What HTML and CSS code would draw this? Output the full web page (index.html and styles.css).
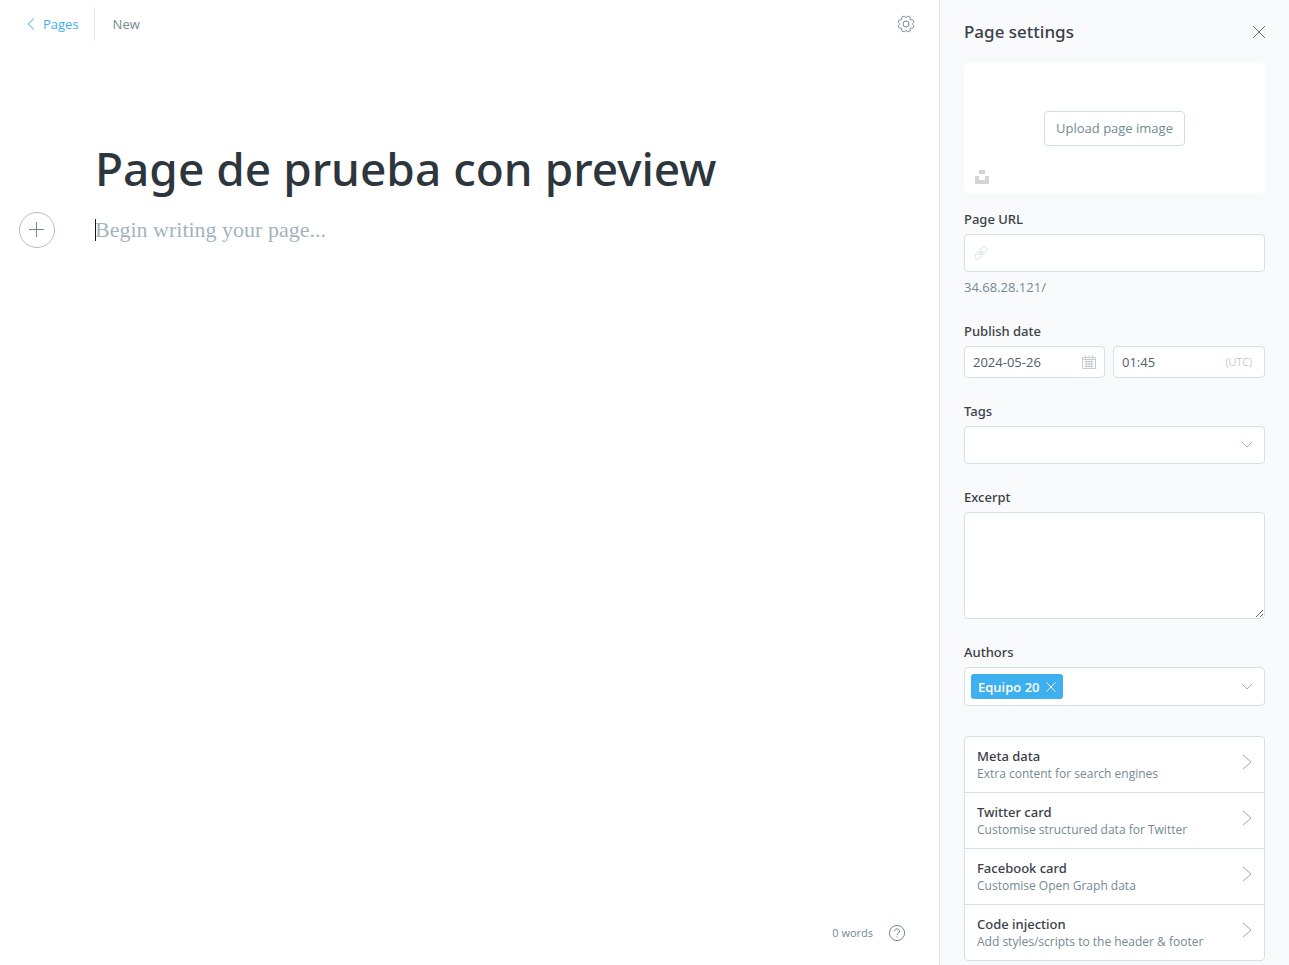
FILE: index.html
```html
<!DOCTYPE html>
<html lang="en">
<head>
<meta charset="utf-8">
<meta name="viewport" content="width=device-width, initial-scale=1">
<title>Page de prueba con preview</title>
<link rel="stylesheet" href="styles.css">
</head>
<body>
<div class="app">
  <main class="editor">
    <header class="editor-header">
      <nav class="breadcrumb">
        <a class="back-link" href="#"><svg class="back-icon" viewBox="0 0 8 12" aria-hidden="true"><path d="M7 .5 1 6l6 5.500"/></svg>Pages</a>
        <span class="status">New</span>
      </nav>
      <button class="icon-button" type="button" aria-label="Settings">
        <svg class="gear-icon" viewBox="0 0 18 18" aria-hidden="true"><circle cx="9" cy="9" r="3"/><path d="M6.900 1.200Q7.600.9 8 1.700Q8.400 2.700 9 2.700T10 1.700Q10.400.9 11.100 1.200L12.800 1.900Q13.500 2.200 13.200 3Q12.800 4 13.300 4.500T14.900 4.800Q15.700 4.500 16 5.200L16.700 6.900Q17 7.600 16.300 8Q15.300 8.400 15.300 9T16.300 10Q17 10.400 16.700 11.100L16 12.800Q15.700 13.500 14.900 13.200Q13.800 12.800 13.300 13.400T13.200 15Q13.500 15.800 12.800 16.100L11.100 16.800Q10.400 17.100 10 16.300Q9.600 15.300 9 15.300T8 16.300Q7.600 17.100 6.900 16.800L5.200 16.100Q4.500 15.800 4.800 15Q5.200 14 4.700 13.400T3.100 13.200Q2.300 13.500 2 12.800L1.300 11.100Q1 10.400 1.700 10Q2.700 9.600 2.700 9T1.700 8Q1 7.600 1.300 6.900L2 5.200Q2.300 4.500 3.100 4.800Q4.200 5.100 4.700 4.500T4.800 3Q4.500 2.200 5.200 1.900Z"/></svg>
      </button>
    </header>
    <section class="canvas">
      <input class="title-input" type="text" aria-label="Page title" value="Page de prueba con preview">
      <div class="body-row">
        <button class="plus-button" type="button" aria-label="Add a card"><svg class="plus-icon" viewBox="0 0 16 16" aria-hidden="true"><path d="M7.500 0v15M0 7.500h15"/></svg></button>
        <div class="body-field">
          <span class="caret"></span>
          <textarea class="body-input" rows="1" aria-label="Page content" placeholder="Begin writing your page..."></textarea>
        </div>
      </div>
    </section>
    <footer class="editor-footer">
      <span>0 words</span>
      <button class="icon-button" type="button" aria-label="Help"><svg class="help-icon" viewBox="0 0 18 18" aria-hidden="true"><circle cx="9" cy="9" r="7.600"/><path d="M6.600 7.200a2.400 2.400 0 1 1 3.700 2C9.400 9.800 9 10.200 9 11"/><path d="M9 12.400v1"/></svg></button>
    </footer>
  </main>

  <aside class="settings">
    <header class="settings-header">
      <h2 class="settings-title">Page settings</h2>
      <button class="icon-button" type="button" aria-label="Close"><svg class="close-icon" viewBox="0 0 12 12" aria-hidden="true"><path d="m0 0 12 12M12 0 0 12"/></svg></button>
    </header>
    <div class="uploader">
      <button class="upload-button" type="button">Upload page image</button>
      <button class="icon-button unsplash-button" type="button" aria-label="Unsplash"><svg class="unsplash-icon" viewBox="0 0 14 14" aria-hidden="true"><path d="M4 0h6v4H4zM0 6h4v4h6V6h4v8H0z"/></svg></button>
    </div>

    <div class="group">
      <label class="label" for="url">Page URL</label>
      <div class="control">
        <svg class="link-icon" viewBox="0 0 14 14" aria-hidden="true"><path d="m6 4 2.300-2.500a2.600 2.600 0 0 1 3.900 3.700L9.500 8a2.600 2.600 0 0 1-3.300.2M8 10l-2.300 2.500a2.600 2.600 0 0 1-3.900-3.700L4.500 6a2.600 2.600 0 0 1 3.300-.2M5 9l4-4"/></svg>
        <input class="input" id="url" type="text">
      </div>
      <p class="hint">34.68.28.121/</p>
    </div>

    <div class="group">
      <label class="label" for="date">Publish date</label>
      <div class="date-row">
        <div class="control control-small">
          <input class="input" id="date" type="text" value="2024-05-26">
          <svg class="calendar-icon" viewBox="0 0 14 14" aria-hidden="true"><path d="M.5 2.500h13v11H.5zM.5 4.500h13M3.500.5v3M7 .5v3M10.500.5v3M2.500 6.500h9M2.500 9h9M2.500 11.500h9M4.500 5.500v7M7 5.500v7M9.500 5.500v7"/></svg>
        </div>
        <div class="control control-small">
          <input class="input" type="text" aria-label="Publish time" value="01:45">
          <span class="zone">(UTC)</span>
        </div>
      </div>
    </div>

    <div class="group">
      <label class="label" for="tags">Tags</label>
      <div class="control">
        <select class="input" id="tags"><option value="" selected></option></select>
        <svg class="chevron-icon" viewBox="0 0 12 8" aria-hidden="true"><path d="m1 1 5 5 5-5"/></svg>
      </div>
    </div>

    <div class="group">
      <label class="label" for="excerpt">Excerpt</label>
      <textarea class="excerpt" id="excerpt"></textarea>
    </div>

    <div class="group">
      <label class="label" for="authors">Authors</label>
      <div class="control authors">
        <span class="token">Equipo 20<button class="icon-button" type="button" aria-label="Remove Equipo 20"><svg class="remove-icon" viewBox="0 0 10 10" aria-hidden="true"><path d="m.5.5 9 9M9.500.5l-9 9"/></svg></button></span>
        <input class="input" id="authors" type="text">
        <svg class="chevron-icon" viewBox="0 0 12 8" aria-hidden="true"><path d="m1 1 5 5 5-5"/></svg>
      </div>
    </div>

    <div class="nav-list">
      <button class="nav-item" type="button"><span class="nav-text"><span class="nav-name">Meta data</span><span class="nav-note">Extra content for search engines</span></span><svg class="arrow-icon" viewBox="0 0 10 16" aria-hidden="true"><path d="m1 1 8 7-8 7"/></svg></button>
      <button class="nav-item" type="button"><span class="nav-text"><span class="nav-name">Twitter card</span><span class="nav-note">Customise structured data for Twitter</span></span><svg class="arrow-icon" viewBox="0 0 10 16" aria-hidden="true"><path d="m1 1 8 7-8 7"/></svg></button>
      <button class="nav-item" type="button"><span class="nav-text"><span class="nav-name">Facebook card</span><span class="nav-note">Customise Open Graph data</span></span><svg class="arrow-icon" viewBox="0 0 10 16" aria-hidden="true"><path d="m1 1 8 7-8 7"/></svg></button>
      <button class="nav-item" type="button"><span class="nav-text"><span class="nav-name">Code injection</span><span class="nav-note">Add styles/scripts to the header &amp; footer</span></span><svg class="arrow-icon" viewBox="0 0 10 16" aria-hidden="true"><path d="m1 1 8 7-8 7"/></svg></button>
    </div>
  </aside>
</div>
</body>
</html>
```
FILE: styles.css
```css
* { box-sizing: border-box; }

body {
  margin: 0;
  color: #394047;
  background: #fff;
  font: 13px/18px "Open Sans", "Noto Sans", sans-serif;
}

button, input, select, textarea {
  margin: 0;
  padding: 0;
  border: 0;
  outline: 0;
  border-radius: 0;
  background: none;
  color: inherit;
  font: inherit;
}

svg {
  display: block;
  flex: none;
  fill: none;
  stroke: currentColor;
}

.app {
  display: grid;
  grid-template-columns: 1fr 350px;
  min-height: 100vh;
}

.editor {
  display: flex;
  flex-direction: column;
  min-width: 0;
}

.editor-header {
  display: flex;
  align-items: center;
  justify-content: space-between;
  height: 48px;
  padding: 0 24px 0 27px;
}

.breadcrumb { display: flex; align-items: center; }

.back-link {
  display: flex;
  align-items: center;
  gap: 8px;
  height: 34px;
  padding-right: 15px;
  border-right: 1px solid #dfe9ef;
  color: #3eb0ef;
  text-decoration: none;
}

.status { padding-left: 18px; color: #738a94; }
.icon-button { display: flex; }
.back-icon { width: 8px; height: 12px; }
.gear-icon { width: 18px; height: 18px; color: #738a94; }

.canvas {
  flex: 1;
  padding: 84px 40px 0 19px;
}

.title-input {
  display: block;
  width: 100%;
  height: 72px;
  padding-left: 76px;
  color: #2c363c;
  font-family: "Noto Sans", sans-serif;
  font-size: 46px;
  font-weight: 500;
  line-height: 72px;
}

.body-row {
  display: flex;
  align-items: center;
  gap: 40px;
  margin-top: 8px;
}

.plus-button {
  display: flex;
  align-items: center;
  justify-content: center;
  width: 36px;
  height: 36px;
  border: 1px solid #aebfc7;
  border-radius: 50%;
  color: #738a94;
}

.plus-icon { width: 16px; height: 16px; }

.body-field {
  position: relative;
  display: flex;
  flex: 1;
}

.caret {
  position: absolute;
  top: 4px;
  left: 0;
  width: 1px;
  height: 22px;
  background: #15171a;
}

.body-input {
  flex: 1;
  height: 30px;
  overflow: hidden;
  resize: none;
  font: 22px/30px Georgia, "Liberation Serif", serif;
}

.body-input::placeholder { color: #a4b4bc; opacity: 1; }

.editor-footer {
  display: flex;
  align-items: center;
  justify-content: flex-end;
  gap: 15px;
  padding: 0 33px 23px 0;
  color: #738a94;
  font-size: 11px;
}

.help-icon { width: 18px; height: 18px; }

.settings {
  padding: 0 24px 4px;
  border-left: 1px solid #dfe5ea;
  background: #f9fafc;
}

.settings-header {
  display: flex;
  align-items: center;
  justify-content: space-between;
  height: 63px;
}

.settings-title,
.label,
.nav-name {
  font-family: "Noto Sans", sans-serif;
  font-weight: 500;
}

.settings-title {
  margin: 0;
  font-size: 17px;
  line-height: 24px;
}

.settings-header .icon-button { color: #626d74; }
.close-icon { width: 12px; height: 12px; }

.uploader {
  position: relative;
  display: flex;
  align-items: center;
  justify-content: center;
  height: 130px;
  margin-bottom: 17px;
  border-radius: 4px;
  background: #fff;
}

.upload-button {
  height: 35px;
  padding: 0 11px;
  border: 1px solid #d1dde3;
  border-radius: 4px;
  color: #738a94;
}

.unsplash-button {
  position: absolute;
  bottom: 9px;
  left: 11px;
}

.unsplash-icon {
  width: 14px;
  height: 14px;
  fill: #d4d4d4;
  stroke: none;
}

.group { margin-bottom: 24px; }

.label {
  display: block;
  margin-bottom: 6px;
}

.control {
  display: flex;
  align-items: center;
  height: 38px;
  padding: 0 11px 0 9px;
  border: 1px solid #d3e1e9;
  border-radius: 4px;
  background: #fff;
}

.control-small { height: 32px; padding: 0 8px; color: #50606a; }

.input {
  flex: 1;
  width: 0;
  min-width: 0;
  height: 100%;
  appearance: none;
}

.link-icon { width: 14px; height: 14px; color: #d3e1e9; }
.hint { margin: 0; padding: 6px 0 2px; color: #738a94; }

.date-row {
  display: grid;
  grid-template-columns: 141fr 152fr;
  gap: 8px;
}

.calendar-icon { width: 14px; height: 14px; color: #c3ccd1; }

.zone {
  padding-right: 4px;
  color: #9fadb5;
  font-size: 11px;
  font-weight: 300;
}

.chevron-icon { width: 12px; height: 8px; color: #9db0ba; }

.excerpt {
  display: block;
  width: 100%;
  height: 107px;
  padding: 8px;
  border: 1px solid #d3e1e9;
  border-radius: 4px;
  background: #fff;
  resize: vertical;
}

.authors {
  height: 39px;
  margin-bottom: 30px;
  padding-left: 6px;
}

.token {
  display: flex;
  align-items: center;
  gap: 6px;
  height: 25px;
  padding: 0 7px;
  border-radius: 3px;
  background: #3eb0ef;
  color: #fff;
  font-weight: 600;
}

.remove-icon { width: 10px; height: 10px; }

.nav-list {
  border: 1px solid #d3e1e9;
  border-radius: 4px;
  background: #fff;
}

.nav-item {
  display: flex;
  align-items: flex-start;
  justify-content: space-between;
  width: 100%;
  height: 55px;
  padding: 10px 12px 0;
  text-align: left;
}

.nav-item + .nav-item {
  height: 56px;
  border-top: 1px solid #d3e1e9;
}

.nav-text { display: grid; }
.nav-note { color: #738a94; font-size: 12px; }
.arrow-icon { width: 10px; height: 16px; margin-top: 7px; color: #94a5ae; }
```
